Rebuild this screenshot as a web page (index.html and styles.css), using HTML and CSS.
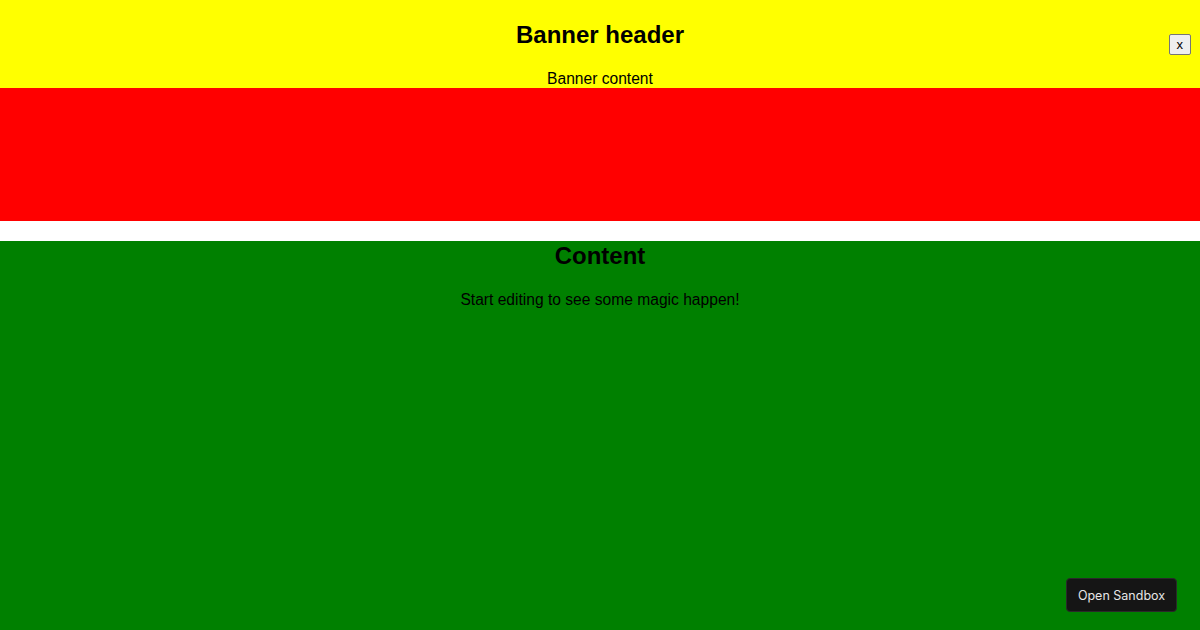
FILE: index.html
```html
<!DOCTYPE html>
<html>
<head>
<meta charset="utf-8">
<link rel="stylesheet" href="styles.css">
</head>
<body>
<div class="banner">
  <h2 class="banner-title">Banner header</h2>
  <p class="banner-text">Banner content</p>
  <button class="close">x</button>
</div>
<div class="red"></div>
<div class="content">
  <h2 class="content-title">Content</h2>
  <p class="content-text">Start editing to see some magic happen!</p>
</div>
<button class="sandbox">Open Sandbox</button>
</body>
</html>
```
FILE: styles.css
```css
html, body {
  margin: 0;
  padding: 0;
  height: 100%;
}
body {
  font-family: "Liberation Sans", Arial, sans-serif;
  text-align: center;
  background: #fff;
  overflow: hidden;
}
.banner {
  position: relative;
  background: #ffff00;
  height: 88px;
  display: flow-root;
}
.banner-title {
  font-size: 24px;
  margin: 21px 0 21px;
}
.banner-text {
  font-size: 15.6px;
  margin: 0;
}
.close {
  position: absolute;
  top: 34px;
  right: 9px;
  font-family: "Liberation Sans", Arial, sans-serif;
  font-size: 13px;
  padding: 2px 7px;
  background: #efefef;
  border: 1px solid #767676;
  border-radius: 2px;
  color: #000;
}
.red {
  background: #ff0000;
  height: 133px;
}
.content {
  background: #008000;
  height: 389px;
  display: flow-root;
  margin-top: 20px;
}
.content-title {
  font-size: 24px;
  margin: 1px 0 21px;
}
.content-text {
  font-size: 15.6px;
  margin: 0;
}
.sandbox {
  position: absolute;
  left: 1066px;
  top: 578px;
  width: 111px;
  height: 34px;
  background: #151515;
  color: #e6e6e6;
  border: 1px solid #2a2a2a;
  border-radius: 4px;
  font-family: Inter, "Liberation Sans", sans-serif;
  font-size: 12.5px;
  padding: 0;
}
```
